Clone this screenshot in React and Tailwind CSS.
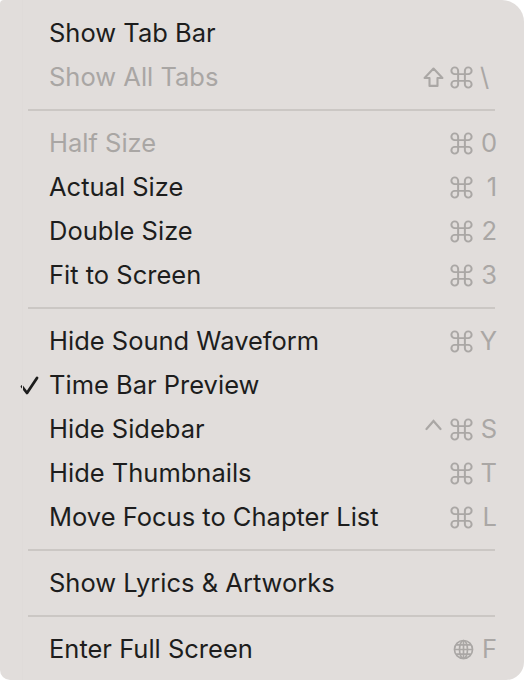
import React from 'react';
import { Command } from 'lucide-react';

const items = [
  { label: 'Show Tab Bar' },
  { label: 'Show All Tabs', disabled: true, mods: ['⇧', '⌘'], key: '\\' },
  'sep',
  { label: 'Half Size', disabled: true, mods: ['⌘'], key: '0' },
  { label: 'Actual Size', mods: ['⌘'], key: '1' },
  { label: 'Double Size', mods: ['⌘'], key: '2' },
  { label: 'Fit to Screen', mods: ['⌘'], key: '3' },
  'sep',
  { label: 'Hide Sound Waveform', mods: ['⌘'], key: 'Y' },
  { label: 'Time Bar Preview', checked: true },
  { label: 'Hide Sidebar', mods: ['^', '⌘'], key: 'S' },
  { label: 'Hide Thumbnails', mods: ['⌘'], key: 'T' },
  { label: 'Move Focus to Chapter List', mods: ['⌘'], key: 'L' },
  'sep',
  { label: 'Show Lyrics & Artworks' },
  'sep',
  { label: 'Enter Full Screen', globe: true, key: 'F' },
];

const GRAY = '#aaa7a5';

function Globe() {
  return (
    <svg width="21" height="21" viewBox="0 0 20 20" fill="none" stroke={GRAY} strokeWidth="1.6" className="mr-[4px]">
      <circle cx="10" cy="10" r="8.6" />
      <ellipse cx="10" cy="10" rx="3.8" ry="8.6" />
      <line x1="10" y1="1.4" x2="10" y2="18.6" />
      <line x1="1.4" y1="10" x2="18.6" y2="10" />
      <path d="M3 5.6 H17 M3 14.4 H17" />
    </svg>
  );
}

function Mod({ m }) {
  if (m === '⇧') {
    return (
      <svg width="21" height="21" viewBox="0 0 20 20" fill="none" stroke={GRAY} strokeWidth="2" strokeLinejoin="round" className="mr-[4px]">
        <path d="M10 1.5 L18.5 10.5 H13.8 V18 H6.2 V10.5 H1.5 Z" />
      </svg>
    );
  }
  if (m === '^') {
    return (
      <svg width="17" height="12" viewBox="0 0 17 12" fill="none" stroke={GRAY} strokeWidth="2.2" strokeLinecap="round" className="mr-[6px] mb-[8px]">
        <path d="M1.5 10 L8.5 2 L15.5 10" />
      </svg>
    );
  }
  return <Command size={27} color={GRAY} strokeWidth={1.75} className="mr-[3px]" />;
}

function Row({ item }) {
  const { label, disabled, checked, mods, key, globe } = item;
  return (
    <div className="flex h-[44px] items-center pl-[20px] pr-[27px]">
      <div className="w-[29px]">
        {checked ? (
          <svg width="19" height="19" viewBox="0 0 19 19" fill="none" stroke="#1d1d1d" strokeWidth="2.8" strokeLinecap="round" strokeLinejoin="round">
            <path d="M2 10.5 L7 17 L17 2" />
          </svg>
        ) : null}
      </div>
      <div className={`flex-1 text-[25.5px] ${disabled ? 'text-[#a9a6a4]' : 'text-[#1d1d1d]'}`}>
        {label}
      </div>
      {key && (
        <div className="flex items-center text-[#aaa7a5]">
          {mods && mods.map((m, i) => <Mod key={i} m={m} />)}
          {globe && <Globe />}
          <span className={`w-[19px] text-[25.5px] leading-none ${key === '\\' ? 'pl-[2px] text-left' : 'text-right'}`}>
            {key}
          </span>
        </div>
      )}
    </div>
  );
}

export default function App() {
  return (
    <div className="min-h-screen bg-white">
      <div className="relative h-[680px] w-[524px] overflow-hidden rounded-tl-[4px] rounded-tr-[22px] rounded-br-[18px] rounded-bl-[10px] bg-[#e1dddb] pt-[11px] font-['Inter',sans-serif]">
        <div className="absolute top-0 bottom-0 left-[22px] w-px bg-[#dfdbd9]" />
        {items.map((item, i) =>
          item === 'sep' ? (
            <div key={i} className="flex h-[22px] items-center pl-[28px] pr-[29px]">
              <div className="h-[2px] w-full bg-[#cbc7c4]" />
            </div>
          ) : (
            <Row key={i} item={item} />
          )
        )}
      </div>
    </div>
  );
}
